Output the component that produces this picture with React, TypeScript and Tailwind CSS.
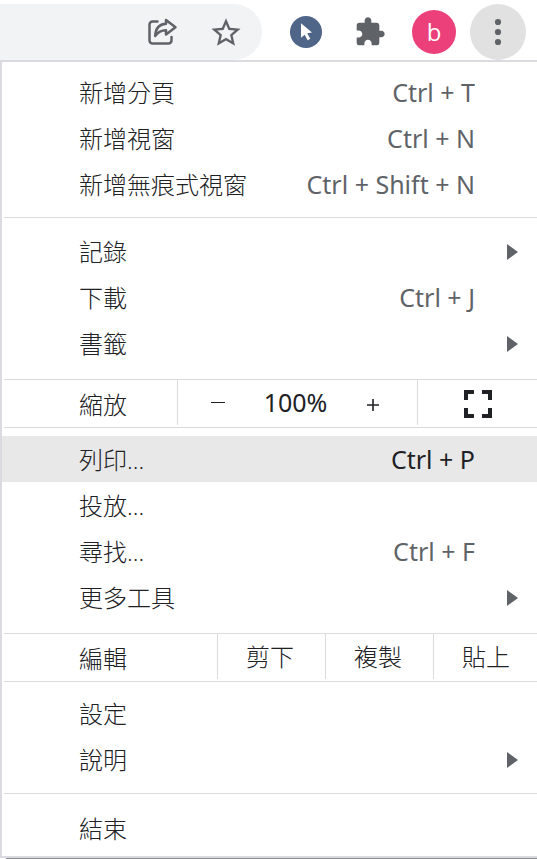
import type { ReactNode } from "react";

interface MenuItemProps {
  label: string;
  shortcut?: string;
  submenu?: boolean;
  active?: boolean;
}

function MenuItem({ label, shortcut, submenu, active }: MenuItemProps) {
  return (
    <button
      type="button"
      role="menuitem"
      aria-haspopup={submenu ? "menu" : undefined}
      className={`flex h-[46px] w-full items-center pl-[77px] text-left ${
        active ? "bg-[#e8e8e8]" : "hover:bg-[#e8e8e8]"
      } ${submenu ? "pr-[19px]" : "pr-[62px]"}`}
    >
      <span className="flex-1">{label}</span>
      {shortcut && (
        <span
          className={`font-['Noto_Sans',sans-serif] text-[25px] font-normal ${
            active ? "text-[#202124]" : "text-[#5f6368]"
          }`}
        >
          {shortcut}
        </span>
      )}
      {submenu && (
        <svg className="h-4 w-3" viewBox="0 0 12 16" fill="#5f6368" aria-hidden="true">
          <path d="M1 0L12 8L1 16z" />
        </svg>
      )}
    </button>
  );
}

function Separator() {
  return <div role="separator" className="ml-0.5 h-px bg-[#dadbdd]" />;
}

function Group({ className, children }: { className: string; children: ReactNode }) {
  return (
    <div role="group" className={className}>
      {children}
    </div>
  );
}

function Toolbar() {
  return (
    <header className="flex h-[60px] items-center bg-white pt-1 pr-[11px]">
      <div className="flex h-14 flex-1 items-center justify-end gap-8 rounded-r-full bg-[#f1f3f4] pr-5">
        <button type="button" aria-label="分享">
          <svg
            className="h-8 w-8"
            viewBox="0 0 32 32"
            fill="none"
            stroke="#5f6368"
            strokeWidth="2.5"
            strokeLinecap="round"
            strokeLinejoin="round"
          >
            <path d="M11.500 5.500H6.500a3 3 0 0 0-3 3v16a3 3 0 0 0 3 3h16a3 3 0 0 0 3-3V21" />
            <path d="M20 4L29.500 11.200L20 18.500V14.200C15 14.200 12 16 9.200 20C9.500 12.500 13.500 8.200 20 7.800Z" />
          </svg>
        </button>
        <button type="button" aria-label="加入書籤">
          <svg className="h-8 w-8" viewBox="1 0.500 22 22" fill="#5f6368">
            <path d="M22 9.240l-7.190-.620L12 2 9.190 8.630 2 9.240l5.460 4.730L5.820 21 12 17.270 18.180 21l-1.630-7.030L22 9.240zM12 15.400l-3.760 2.270 1-4.280-3.320-2.880 4.380-.380L12 6.100l1.710 4.040 4.380.380-3.320 2.880 1 4.280L12 15.400z" />
          </svg>
        </button>
      </div>
      <div className="flex items-center pl-7">
        <button type="button" aria-label="游標擴充功能">
          <svg className="h-8 w-8" viewBox="0 0 32 32">
            <circle cx="16" cy="16" r="16" fill="#4f6688" />
            <path
              d="M11 7.300L22 16.600L17.200 17.300L20.300 22.800L17.600 24.300L14.700 18.700L11 21.800Z"
              fill="#fff"
            />
          </svg>
        </button>
        <button type="button" aria-label="擴充功能" className="ml-8">
          <svg className="h-8 w-8" viewBox="0 0 24 24" fill="#5f6368">
            <path d="M20.500 11H19V7c0-1.100-.900-2-2-2h-4V3.500C13 2.120 11.880 1 10.500 1S8 2.120 8 3.500V5H4c-1.100 0-1.990.900-1.990 2v3.800H3.500c1.490 0 2.700 1.210 2.700 2.700s-1.210 2.700-2.700 2.700H2V20c0 1.100.900 2 2 2h3.800v-1.500c0-1.490 1.210-2.700 2.700-2.700 1.490 0 2.700 1.210 2.700 2.700V22H17c1.100 0 2-.900 2-2v-4h1.500c1.380 0 2.500-1.120 2.500-2.500S21.880 11 20.500 11z" />
          </svg>
        </button>
        <button
          type="button"
          className="ml-[26px] flex h-11 w-11 items-center justify-center rounded-full bg-[#ec407a] text-2xl text-white"
        >
          b
        </button>
        <button
          type="button"
          aria-label="選單"
          className="ml-3.5 flex h-14 w-14 items-center justify-center rounded-full bg-[#e1e1e1]"
        >
          <svg className="h-7 w-7" viewBox="0 0 28 28" fill="#5f6368">
            <circle cx="14" cy="4" r="3.100" />
            <circle cx="14" cy="14" r="3.100" />
            <circle cx="14" cy="24" r="3.100" />
          </svg>
        </button>
      </div>
    </header>
  );
}

export default function App() {
  return (
    <div className="bg-white font-['Open_Sans','Noto_Sans_CJK_TC',sans-serif] text-2xl text-[#202124]">
      <Toolbar />
      <div
        role="menu"
        className="border-y-2 border-l-2 border-[#dadae0] bg-white font-light"
      >
        <Group className="pt-2 pb-[9px]">
          <MenuItem label="新增分頁" shortcut="Ctrl + T" />
          <MenuItem label="新增視窗" shortcut="Ctrl + N" />
          <MenuItem label="新增無痕式視窗" shortcut="Ctrl + Shift + N" />
        </Group>
        <Separator />
        <Group className="pt-[11px] pb-3">
          <MenuItem label="記錄" submenu />
          <MenuItem label="下載" shortcut="Ctrl + J" />
          <MenuItem label="書籤" submenu />
        </Group>
        <Separator />
        <div className="grid h-[47px] grid-cols-[175px_241px_1fr] pb-0.5">
          <span className="flex items-center pt-1 pl-[77px]">縮放</span>
          <div className="flex items-center justify-between border-x border-[#dadbdd] px-8">
            <button type="button" aria-label="縮小" className="flex h-8 w-4 items-center justify-center">
              <svg className="h-4 w-4" viewBox="0 0 16 16" aria-hidden="true">
                <path d="M1 7.500H15" stroke="#202124" />
              </svg>
            </button>
            <span className="pl-1 font-['Noto_Sans',sans-serif] text-[25px] font-normal">100%</span>
            <button type="button" aria-label="放大" className="flex h-8 w-6 items-center justify-center">
              <svg className="h-4 w-4" viewBox="0 0 16 16" aria-hidden="true">
                <path d="M2 10H14M8 4V16" stroke="#202124" strokeWidth="1.600" />
              </svg>
            </button>
          </div>
          <button type="button" aria-label="全螢幕" className="flex items-center justify-center pt-0.5">
            <svg className="h-7 w-7" viewBox="0 0 28 28" fill="none" stroke="#202124" strokeWidth="4">
              <path d="M2 10V2H10M18 2H26V10M26 18V26H18M10 26H2V18" />
            </svg>
          </button>
        </div>
        <Separator />
        <Group className="pt-2 pb-[13px] [&>button]:pt-0.5">
          <MenuItem label="列印..." shortcut="Ctrl + P" active />
          <MenuItem label="投放..." />
          <MenuItem label="尋找..." shortcut="Ctrl + F" />
          <MenuItem label="更多工具" submenu />
        </Group>
        <Separator />
        <div className="grid h-[47px] grid-cols-[215px_108px_108px_1fr] pb-0.5">
          <span className="flex items-center pt-1 pl-[77px]">編輯</span>
          {["剪下", "複製", "貼上"].map((action) => (
            <button
              key={action}
              type="button"
              role="menuitem"
              className="border-l border-[#dadbdd] pl-7 text-left"
            >
              {action}
            </button>
          ))}
        </div>
        <Separator />
        <Group className="pt-[9px] pb-2.5">
          <MenuItem label="設定" />
          <MenuItem label="說明" submenu />
        </Group>
        <Separator />
        <Group className="pt-3 pb-1">
          <MenuItem label="結束" />
        </Group>
      </div>
      <div className="ml-1.5 h-px bg-[#8c8d91]" />
    </div>
  );
}
